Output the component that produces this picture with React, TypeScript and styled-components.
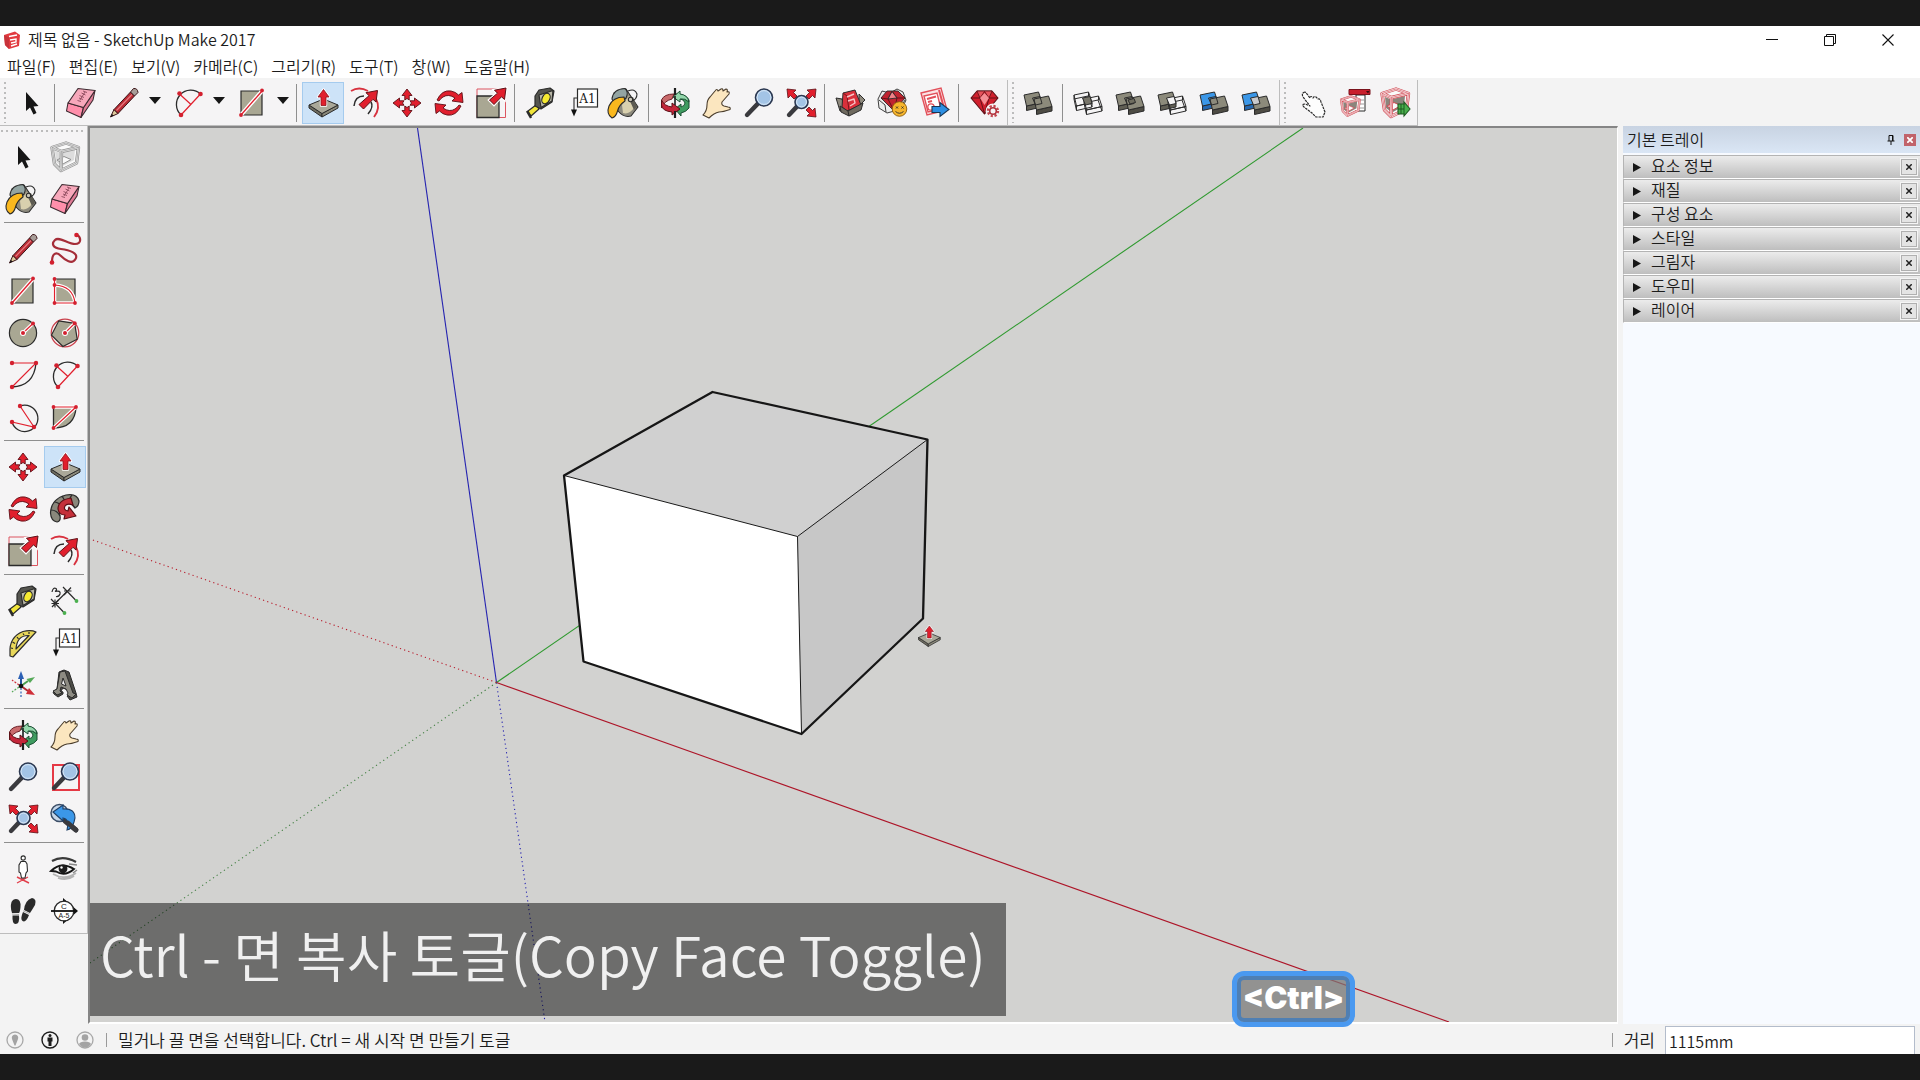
import React from "react";
import styled, { createGlobalStyle } from "styled-components";

const UI_FONT = `"Noto Sans CJK KR", "Open Sans", sans-serif`;

const GlobalStyle = createGlobalStyle`
  * { box-sizing: border-box; }
  body { margin: 0; background: #1a1a1a; }
  button, input { font: inherit; color: inherit; }
`;

/* ---------- icon drawings, all on a 32 x 32 grid ---------- */

const RED = "#e11f2d";
const INK = "#2b2b2b";
const STONE = "#a9a793";

const Dots = ({ at, r = 2 }: { at: [number, number][]; r?: number }) => (
  <>
    {at.map(([x, y]) => (
      <circle key={`${x}-${y}`} cx={x} cy={y} r={r} fill="#d3202f" />
    ))}
  </>
);

const Lens = ({ x, y, r, hx, hy }: { x: number; y: number; r: number; hx: number; hy: number }) => (
  <>
    <path d={`M${x - r * 0.75} ${y + r * 0.75}L${hx} ${hy}`} stroke="#3a3a3e" strokeWidth={4.4} strokeLinecap="round" />
    <circle cx={x} cy={y} r={r} fill="#a3c4e6" stroke="#2c3850" strokeWidth={1.6} />
    <circle cx={x} cy={y} r={r - 1.6} fill="none" stroke="#d7e6f5" strokeWidth={1} />
  </>
);

const ArrowUpRight = () => (
  <path d="M31 1L29.5 12.5L26.5 9.8L19 17.5L14.5 13L22.5 6.2L19.5 3.2Z" fill={RED} stroke="#5c1016" strokeWidth={1} />
);

const Slab = () => (
  <g strokeLinejoin="round">
    <path d="M2 18L15 26.5V30L2 21Z" fill="#6f6d60" stroke={INK} />
    <path d="M31 18L15 26.5V30L31 21Z" fill="#8b897a" stroke={INK} />
    <path d="M2 18L16.5 12L31 18L15 26.5Z" fill="#aaa899" stroke={INK} />
    <path d="M16.5 2.5L22 10H19V18.5H14V10H11Z" fill={RED} stroke="#fff" strokeWidth={2.4} />
    <path d="M16.5 2.5L22 10H19V18.5H14V10H11Z" fill={RED} stroke="#8a131c" strokeWidth={0.8} />
  </g>
);

const Solid = ({ x, y, top, side, wire }: { x: number; y: number; top: string; side: string; wire?: boolean }) => (
  <g transform={`translate(${x} ${y})`} stroke={INK} strokeWidth={1} strokeLinejoin="round">
    <path d="M2.5 14V18.5L18 15V10.5Z" fill={wire ? "none" : side} />
    <path d="M0 3L14.5 0L18 10.5L2.5 14Z" fill={wire ? "none" : top} />
    {wire && <path d="M0 3V7L2.5 18.5M0 7L14 4L18 15M14.5 0V4" fill="none" />}
  </g>
);

const SolidPair = ({ back, mid, wireBack, wireFront }: {
  back?: string; mid?: string; wireBack?: boolean; wireFront?: boolean;
}) => (
  <>
    <Solid x={1} y={5} top={back ?? "#8c8a7b"} side={back ? "#2467b0" : "#605e54"} wire={wireBack} />
    <Solid x={11} y={9} top="#8c8a7b" side="#4e4c44" wire={wireFront} />
    <path d="M9.5 11L17 9.5L19 16.5L12.5 18Z" fill={mid ?? "none"} stroke={INK} />
  </>
);

const BoxFrame = ({ color, light, core }: { color: string; light: string; core: string }) => {
  const d = "M3 6.5L17 2L29.5 6.5L27.5 22L12 29.5L5.5 23ZM3 6.5L12.5 10.5L29.5 6.5M12.5 10.5L12 29.5";
  return (
    <g fill="none" strokeLinejoin="round">
      <path d="M5 8L17 4L28 8L26 21L12 27L6 22Z" fill="#fafafa" />
      <path d="M14 12L26 9L25 19L14 25ZM6 10L11 12L11 24L7 21Z" fill={core} />
      <path d="M8 19L15 15.5L22 18.5L14 23Z" stroke={color} fill="#fafafa" />
      <path d={d} stroke={color} strokeWidth={3.4} />
      <path d={d} stroke={light} strokeWidth={2} />
      <path d={d} stroke={color} strokeWidth={0.6} />
    </g>
  );
};

const Bucket = () => (
  <g stroke={INK} strokeWidth={1.1} strokeLinejoin="round" transform="translate(-2 0)">
    <path d="M7 6L11 24Q17 31 24 29L31 20L19 2Z" fill="#8d8a7d" />
    <path d="M15 18L22 9L27 21Q22 28 16 26Z" fill="#d9d0ae" stroke="none" />
    <path d="M22 12L26 10L30 20L27 23Z" fill="#5d5b52" stroke="none" />
    <path d="M21 4Q28 1 30 7Q30 13 24 14" fill="none" />
    <path d="M5 12Q6 2 18 1.5Q22 5 19 11Q14 16 7 16Z" fill="#93a4a2" />
    <path d="M17 10Q6 10 2 19Q-1 27 5 31Q9 30 10.5 24Q12 18 18 14Z" fill="#fab81e" />
    <circle cx={23.5} cy={12.5} r={2.2} fill="#c9c6b9" />
  </g>
);

const icons = {
  select: <path d="M11 5V24L15 20.5L18.5 27.5L21.5 26L18.5 19.5L23.5 19Z" fill="#161616" />,
  component: <BoxFrame color="#8f8f8f" light="#e6e6e6" core="#dddddd" />,
  paint: <Bucket />,
  eraser: (
    <g stroke="#3d2a30" strokeWidth={1.1} strokeLinejoin="round">
      <path d="M3 16L18.5 20.5L16 30.5L1.5 24Z" fill="#ff8fab" />
      <path d="M18.5 20.5L30 3.5L28 13L16 30.5Z" fill="#e07c96" />
      <path d="M13 1.5L30 3.5L18.5 20.5L3 16Z" fill="#f7a8bb" />
      <path d="M12.5 13.5L16 14.5M14 11L18 12.5M14.5 8.5L19 10.5M16.5 6L20.5 8M18 4L22 5.5M15 13L20 5" fill="none" stroke="#8c4a5c" strokeWidth={0.9} />
    </g>
  ),
  pencil: (
    <g stroke="#3a1216" strokeWidth={1} strokeLinejoin="round">
      <path d="M2.5 30L6 22.5L10 26.5Z" fill="#dcc99b" />
      <path d="M6 22.5L22.5 5L26.5 9L10 26.5Z" fill="#b92a33" />
      <path d="M8.5 23.5L24 7.5" stroke="#e77a80" strokeWidth={1.2} />
      <path d="M22.5 5L25.5 1.5Q29.5 1 30 5.5L26.5 9Z" fill="#a79d98" />
      <path d="M2.5 30L4 27L5.6 28.6Z" fill="#111" stroke="none" />
    </g>
  ),
  freehand: (
    <>
      <path d="M3 29C3 19 8 19 12 23S23 32 26.5 26S20 17 12 16S2 11 6 7S19 11 26 11S32 4 28 2" fill="none" stroke="#a52d38" strokeWidth={2.2} />
      <Dots at={[[3, 29.5], [27.5, 2]]} r={2.3} />
    </>
  ),
  rectangle: (
    <>
      <path d="M5 4H26V28H5Z" fill={STONE} stroke={INK} strokeWidth={1.2} />
      <path d="M5 28L26 4" stroke="#fff" strokeWidth={4} />
      <path d="M5 28L26 4" stroke={RED} strokeWidth={1.3} />
      <Dots at={[[5, 28], [26, 3.5]]} r={1.9} />
    </>
  ),
  rotatedRect: (
    <>
      <path d="M5.5 4H26V28H5.5Z" fill={STONE} stroke={INK} strokeWidth={1.2} />
      <path d="M5.5 4V28H26Q24 11 5.5 10" fill="none" stroke="#fff" strokeWidth={3.6} />
      <path d="M5.5 4V28H26Q24 11 5.5 10" fill="none" stroke={RED} strokeWidth={1.2} />
      <Dots at={[[5.5, 4], [5.5, 10], [5.5, 28], [26, 28]]} r={1.9} />
    </>
  ),
  circle: (
    <>
      <circle cx={16} cy={16} r={13.6} fill={STONE} stroke={INK} strokeWidth={1.2} />
      <path d="M16 16L26 6.5" stroke="#fff" strokeWidth={3.6} />
      <path d="M16 16L26 6.5" stroke={RED} strokeWidth={1.2} />
      <circle cx={16} cy={16} r={3} fill="#fff" />
      <Dots at={[[16, 16], [26, 6.5]]} />
    </>
  ),
  polygon: (
    <>
      <circle cx={16} cy={16} r={13.8} fill="#fbeeee" stroke="#c9404b" strokeWidth={1.2} />
      <path d="M25.7 6.3L28.2 22.2L13.9 29.5L2.5 18.1L9.8 3.8Z" fill={STONE} stroke={INK} strokeWidth={1.2} />
      <path d="M16 16L25.7 6.3" stroke="#fff" strokeWidth={3.6} />
      <path d="M16 16L25.7 6.3" stroke={RED} strokeWidth={1.2} />
      <circle cx={16} cy={16} r={3} fill="#fff" />
      <Dots at={[[16, 16], [25.7, 6.3]]} />
    </>
  ),
  arcCenter: (
    <>
      <path d="M5 28Q27 27 29 4" fill="none" stroke={INK} strokeWidth={1.3} />
      <path d="M5 4H29L5 28" fill="none" stroke={RED} strokeWidth={1.1} />
      <Dots at={[[5, 4], [29, 4], [5, 28]]} r={2.2} />
    </>
  ),
  arc: (
    <>
      <path d="M28.5 7A14.2 14.2 0 0 0 9 28" fill="none" stroke={INK} strokeWidth={1.3} />
      <path d="M28.5 7L9 28M7.5 7L19 17.5" fill="none" stroke={RED} strokeWidth={1.2} />
      <Dots at={[[28.5, 7], [9, 28], [7.5, 6.5]]} r={2.3} />
    </>
  ),
  arc3: (
    <>
      <path d="M13 5A13.2 13.2 0 1 1 5 21" fill="none" stroke={INK} strokeWidth={1.3} />
      <path d="M13 5L27 26L5 21" fill="none" stroke={RED} strokeWidth={1.2} />
      <Dots at={[[13, 5], [27, 26], [5, 21]]} r={2.2} />
    </>
  ),
  pie: (
    <>
      <path d="M4.5 6H27Q26 27 4.5 27Z" fill={STONE} stroke={INK} strokeWidth={1.3} />
      <path d="M4.5 6H27L4.5 27" fill="none" stroke="#fff" strokeWidth={3.6} />
      <path d="M4.5 6H27L4.5 27" fill="none" stroke={RED} strokeWidth={1.2} />
      <Dots at={[[4.5, 6], [27, 6], [4.5, 27]]} r={1.9} />
    </>
  ),
  move: (
    <g fill={RED} stroke="#5c1016" strokeWidth={0.9}>
      {[0, 90, 180, 270].map((a) => (
        <path key={a} d="M16 2L21 8.5H18.2V13L16 11.5L13.8 13V8.5H11Z" transform={`rotate(${a} 16 16)`} />
      ))}
    </g>
  ),
  pushpull: <Slab />,
  rotate: (
    <g fill={RED} stroke="#5c1016" strokeWidth={0.9} strokeLinejoin="round">
      {[0, 180].map((a) => (
        <path key={a} d="M4 13Q9 2.5 18 4Q23 5 25.5 8L29 5.5L30 15.5L19 14L22 11Q15.5 6.5 10 10Q7.5 11.5 6 14Z" transform={`rotate(${a} 16 16)`} />
      ))}
    </g>
  ),
  followMe: (
    <g stroke={INK} strokeWidth={1.2} strokeLinejoin="round">
      <path d="M30 8Q28 0 17 2Q2 6 1.5 20Q2 28 8 29Q12 28 11 23Q9 15 17 11Q23 9 26 15Q30 13 30 8Z" fill="#8a887c" />
      <path d="M23 2Q18 7 26 15M2 17Q8 17 11 23M6 9Q11 10 13 14M13 3Q15 7 18 10" fill="none" />
      <path d="M22 5Q9 7 9 16Q10 22 16 22L15 26L27 23L20 14L19 18Q14 17 16 13Q18 10 24 12Z" fill="#c5303a" stroke="#5c1016" />
    </g>
  ),
  scale: (
    <>
      <path d="M2 2H30.5V30.5H2Z" fill="none" stroke="#dc5560" />
      <path d="M2 9H24V30.5H2Z" fill={STONE} stroke={INK} strokeWidth={1.3} />
      <path d="M31 1L29.5 12.5L26.5 9.8L19 17.5L14.5 13L22.5 6.2L19.5 3.2Z" stroke="#fff" strokeWidth={3} />
      <ArrowUpRight />
    </>
  ),
  offset: (
    <>
      <path d="M2 4Q10 -1 19 4M27 12Q32 21 25 30" fill="none" stroke="#d8323f" strokeWidth={1.9} />
      <path d="M5 19Q6 9 15 9M22 15Q25 20 19 27" fill="none" stroke={INK} strokeWidth={1.5} />
      <g transform="translate(-2.5 2.5)">
        <path d="M31 1L29.5 12.5L26.5 9.8L17 19.5L12.5 15L22.5 6.2L19.5 3.2Z" fill={RED} stroke="#5c1016" />
      </g>
    </>
  ),
  tape: (
    <g stroke={INK} strokeWidth={1.2} strokeLinejoin="round">
      <path d="M3 24L11 18L14 22L6 29Z" fill="#f1e53a" />
      <path d="M2 24L6 31" strokeWidth={2.4} />
      <path d="M10 9L14 3L25 1L29 4L27 15L16 22L10 19Z" fill="#55554f" />
      <path d="M14 8L28 3.5L27 14L16 20.5Z" fill="#b9b7a8" />
      <ellipse cx={21} cy={11.5} rx={3.8} ry={5.6} transform="rotate(25 21 11.5)" fill="#f6ea32" />
    </g>
  ),
  dimension: (
    <>
      <path d="M6 18.5L18.5 6M2 14L14.5 27M14 2L26.5 15" stroke={INK} strokeWidth={1.2} />
      <path d="M2.5 18.5H10M15 6H22.5M9.5 15L3 22M22 2.5L15 10M6 14.5V22.5" stroke={INK} strokeWidth={1.2} />
      <path d="M3 7Q4 2 7 3.5Q8.5 5 6 6.5Q12 5 11 9Q10 12 7 11.5" fill="none" stroke={INK} strokeWidth={1.2} />
      <circle cx={27.5} cy={16} r={1.9} fill="#4bb04f" />
      <circle cx={15.5} cy={28} r={1.9} fill="#4bb04f" />
    </>
  ),
  text: (
    <>
      <rect x={10.5} y={2} width={20} height={18} fill="#fff" stroke={INK} strokeWidth={1.2} />
      <text x={20.5} y={15.5} fontSize={12} textAnchor="middle" fontFamily="'DejaVu Serif', serif" fill="#222">A1</text>
      <path d="M10 11H7V24" fill="none" stroke={INK} strokeWidth={1.1} />
      <path d="M4 22.5H10L7 29.5Z" fill="#111" />
    </>
  ),
  protractor: (
    <g fill="#e8d75a" stroke={INK} strokeWidth={1.2} strokeLinejoin="round">
      <path fillRule="evenodd" d="M3 26Q2 10 16 4.5Q24 2.5 29 5L6 30L3 29ZM9 22L22 8.5Q10 8 9 22Z" />
      <path d="M4 21L6 21.5M5.5 15L8 16.5M10 10L11.5 12M16 6.5L17 8M22 5L22 7" />
    </g>
  ),
  axes: (
    <>
      <path d="M14 17V9" stroke="#27529c" strokeWidth={2} />
      <path d="M14 2L17 10H11Z" fill="#2c60b5" />
      <path d="M14 17L21 12" stroke="#4a9c4e" strokeWidth={2} />
      <path d="M28 8L23 14L19.5 10Z" fill="#55a958" />
      <path d="M14 17L21 22" stroke="#b32a33" strokeWidth={2} />
      <path d="M28 26L19 25L22 19Z" fill="#cf2f39" />
      <path d="M14 19V28" stroke="#2c60b5" strokeWidth={1.2} strokeDasharray="2 1.5" />
      <path d="M12 18L5 23" stroke="#55a958" strokeWidth={1.2} strokeDasharray="2 1.5" />
      <path d="M12 16L5 11" stroke="#cf2f39" strokeWidth={1.2} strokeDasharray="2 1.5" />
      <circle cx={14} cy={17} r={2.3} fill="#111" />
    </>
  ),
  text3d: (
    <g stroke={INK} strokeWidth={1} strokeLinejoin="round">
      <path d="M5 25L9 28L14 25V23L12 22L14 19L19 21L20 26L18 27L21 31L28 28L27 24L20 3L15 1L10 3L8 20L4 23Z" fill="#4c4b46" />
      <path d="M4 22L8 20L11 3L16 2L24 24L27 25L23 29L18 26L19 24L17 20L12 18L11 22L13 24L8 26Z" fill="#8d8b82" />
      <path d="M12.5 15L14 9L17 17Z" fill="#f4f3f4" />
    </g>
  ),
  orbit: (
    <g strokeWidth={1} strokeLinejoin="round">
      <path d="M15 7Q5 7 2.5 13V21Q5 14 13 12Z" fill="#c96a6c" stroke="#6b1e24" />
      <path d="M17 7Q27 7 30 13V21Q27 25 22 26V29L16 22L22 17V20Q26 19 26 16Q25 12 17 11Z" fill="#3f9c60" stroke="#1c4f33" />
      <path d="M14 10L21 4V7Q29 8 30 15Q26 11 21 12V15Z" fill="#93d6ab" stroke="#1c4f33" />
      <path d="M2.5 13Q5 19 13 20V16L21 22L13 28V25Q3 24 2.5 18Z" fill="#c4263a" stroke="#5c1016" />
      <path d="M16 1V8M16 24V31" stroke="#1e1e1e" strokeWidth={2.2} />
      <path d="M16 9V18" stroke="#1e1e1e" strokeWidth={1.6} />
    </g>
  ),
  pan: (
    <path d="M2 28Q6 24 6 18Q6 13 9 10L14 4Q16 1 17 4L20 2Q22 1 22 4L25 2Q27 2 26 5Q29 4 28 7L21 15Q20 18 23 19L27 20Q30 20 29 22.5Q22 25 18 25Q13 26 8 31Z" fill="#fbe6bf" stroke="#4a3d2c" strokeWidth={1.1} strokeLinejoin="round" />
  ),
  zoom: <Lens x={21} y={10.5} r={8.5} hx={4} hy={28} />,
  zoomWindow: (
    <>
      <path d="M4 4H30V29H4Z" fill="none" stroke="#e53945" strokeWidth={2} />
      <Lens x={21} y={10.5} r={8.5} hx={5} hy={27} />
    </>
  ),
  zoomExtents: (
    <>
      <g fill={RED} stroke="#5c1016" strokeWidth={0.8}>
        <path d="M2 2L11 3L8.5 5.5L12 9L9 12L5.5 8.5L3 11Z" />
        <path d="M31 2L30 11L27.5 8.5L24 12L21 9L24.5 5.5L22 3Z" />
        <path d="M31 30L22 29L24.5 26.5L21 23L24 20L27.5 23.5L30 21Z" />
      </g>
      <Lens x={16.5} y={15} r={6.5} hx={4} hy={28} />
    </>
  ),
  previous: (
    <>
      <circle cx={10.5} cy={10} r={8.5} fill="#c6d6e8" stroke="#3b4d66" strokeWidth={1.5} />
      <path d="M16 18L27 27" stroke="#3a3a3e" strokeWidth={5} strokeLinecap="round" />
      <path d="M4 9L14 2V6Q26 5 26 15L25 19Q23 26 18 27Q21 16 14 15V18Z" fill="#3b97e8" stroke="#1d3f66" strokeWidth={1.1} />
      <path d="M19 20L27 27" stroke="#3a3a3e" strokeWidth={4.6} strokeLinecap="round" />
    </>
  ),
  positionCamera: (
    <>
      <path d="M10 30L21 24M10 24L22 30M16 24V28" stroke="#e2404c" strokeWidth={1.4} />
      <path d="M14 8.5L12 12V19L13.5 20L14.5 25H18L19 20L20.5 18L20 11L18.5 8.5Z" fill="#fff" stroke={INK} strokeWidth={1.1} />
      <circle cx={16.2} cy={5} r={2.1} fill="#fff" stroke={INK} strokeWidth={1.1} />
    </>
  ),
  eye: (
    <>
      <path d="M3 8Q14 2 27 9" fill="none" stroke="#3a3a3a" strokeWidth={2.2} />
      <path d="M4 21Q16 28 27 20M9 25Q18 28 25 23" fill="none" stroke="#b4b4b4" strokeWidth={1.8} />
      <path d="M2 18Q12 8 25 16Q16 24 7 18.5Z" fill="#f6f6f6" stroke="#161616" strokeWidth={1.9} />
      <circle cx={14} cy={15.8} r={4.4} fill="#1c1c1c" />
      <circle cx={12.5} cy={14.5} r={1.2} fill="#fff" />
      <path d="M20 11L28 12M24 20L28 17" stroke="#888" strokeWidth={1.4} />
    </>
  ),
  walk: (
    <g fill="#2a2a2a">
      <path d="M9 4Q14 4 13.5 12Q13 17 12 18L5 18Q3 12 4.5 7Q6 4 9 4Z" />
      <path d="M5.5 20.5H12Q13 29 8.5 29Q5 29 5.5 20.5Z" />
      <path d="M25 3Q30 4 28 10Q25 15 23 18L17 15Q18 5 25 3Z" />
      <path d="M16 17L22 20Q19 28 15.5 26Q13 24 16 17Z" />
      <path d="M5 19L12 19.5M16 15.8L22.5 18.7" stroke="#aaa" strokeWidth={1} />
    </g>
  ),
  section: (
    <>
      <path d="M14 3L29 16L14 29Z" fill="#111" />
      <circle cx={15} cy={16} r={9.8} fill="#fff" stroke={INK} strokeWidth={1.3} />
      <path d="M2 16H28" stroke="#111" strokeWidth={1.8} />
      <text x={15} y={13.5} fontSize={8} textAnchor="middle" fontFamily="'Liberation Sans', sans-serif" fill="#222">C</text>
      <text x={15} y={23} fontSize={7} textAnchor="middle" fontFamily="'Liberation Sans', sans-serif" fill="#222">A-5</text>
    </>
  ),
  warehouse: (
    <g stroke={INK} strokeWidth={1} strokeLinejoin="round">
      <path d="M1 11L7 12L10 23L5 24ZM24 7L30 13L24 19Z" fill="#8e897d" />
      <path d="M8 6L20 3L26 18L12 24L7 20Z" fill="#d9303b" />
      <path d="M8 6L12 9L14 23" fill="none" stroke="#7a131c" />
      <path d="M12 10L19 7M13 14L19 12L20 16L15 19" fill="none" stroke="#f6c4c7" strokeWidth={1.4} />
      <path d="M5 19L13 24L28 16L26 23L14 29L6 25Z" fill="#6f6a5f" />
      <path d="M13 24L14 29" />
    </g>
  ),
  extensions: (
    <g stroke={INK} strokeWidth={0.9} strokeLinejoin="round">
      <path d="M5 4L13 6L20 2L26 5L29 13L25 22L10 26L2 21L1 12Z" fill="#ececec" />
      <path d="M4 11L10 4L21 4L28 11L17 24Z" fill="#c02330" />
      <path d="M4 11L11 12L17 24M11 12L15 4L20 11L28 11M20 11L17 24" fill="none" stroke="#5c1016" />
      <path d="M11 12L15 4.5L20 11Z" fill="#f08088" />
      <path d="M2 13L8 18L9 25M25 18L28 13" fill="none" />
      <circle cx={22.5} cy={22} r={7.3} fill="#f6b52c" stroke="#8a5b0c" />
      <path d="M19 19.5L21 21.5M21 19.5L19 21.5M24.5 19.5L26.5 21.5M26.5 19.5L24.5 21.5M18.5 24.5Q22.5 28 26.5 24.5" fill="none" />
    </g>
  ),
  layout: (
    <>
      <path d="M2 6L22 1L28 23L8 28Z" fill="#fbe3e4" stroke="#e2505a" strokeWidth={1.4} />
      <path d="M5 9L18 6L22 22L9 25Z" fill="#fff" stroke="#e2505a" strokeWidth={1.4} />
      <path d="M8 12L17 9.5M9 15L13 14M20 3L25 21" stroke="#e2505a" strokeWidth={2} />
      <circle cx={12} cy={20} r={3.2} fill="#fff" stroke="#e2505a" strokeWidth={1.3} />
      <path d="M13 19.5H21V15.5L30 22.5L21 29.5V25.5H13Z" fill="#2c8fe3" stroke="#1a3552" strokeWidth={1.1} />
    </>
  ),
  extensionManager: (
    <g strokeLinejoin="round">
      <path d="M2 11L8 4H23L29 11L15.5 27Z" fill="#d0202d" stroke="#5c1016" strokeWidth={1.1} />
      <path d="M8 4L11 11L15.5 4.5L20 11L23 4Z" fill="#e8525b" stroke="#5c1016" strokeWidth={0.8} />
      <path d="M2 11H29M11 11L15.5 27L20 11" fill="none" stroke="#5c1016" strokeWidth={0.9} />
      <path d="M11 11L15.5 6L20 11L15.5 18Z" fill="#f58f95" />
      <circle cx={24} cy={24} r={5.2} fill="none" stroke="#f4f3f4" strokeWidth={4.5} />
      <circle cx={24} cy={24} r={5} fill="none" stroke="#c4464f" strokeWidth={2.4} strokeDasharray="2.2 1.7" />
      <circle cx={24} cy={24} r={3.3} fill="#f4f3f4" stroke="#b0323c" strokeWidth={1.6} />
    </g>
  ),
  outerShell: <SolidPair />,
  intersect: <SolidPair wireBack wireFront mid="#77756a" />,
  union: (
    <>
      <SolidPair />
      <path d="M13 13L19 11.5L20.5 15.5L15 17Z" fill="#6f6d60" stroke={INK} />
    </>
  ),
  subtract: <SolidPair wireFront mid="#f4f3f4" />,
  trim: <SolidPair back="#3b97e8" />,
  split: <SolidPair back="#3b97e8" mid="#c9c9cc" />,
  hand: (
    <path transform="translate(4 2)" d="M6 3Q2 4 4 8L11 17L6 15Q2 15 5 18L13 24L17 28H24L26 23L22 13Q21 9 19 10L17 8Q15 7 14 9Q12 6 11 9L8 5Z" fill="#fdfdfd" stroke={INK} strokeWidth={1.2} strokeDasharray="2.5 0.8" strokeLinejoin="round" />
  ),
  componentOptions: (
    <g transform="translate(1 0)">
      <path d="M18 8H27V24H18Z" fill="#fff" stroke={INK} />
      <path d="M20 13H26M20 17H26M20 21H26" stroke="#9a9a9a" />
      <path d="M11 2.5H32V7.5H11Z" fill="#c91f2c" stroke="#7a131c" />
      <path d="M28 4H31.5L30 6.5Z" fill="#3c0a0e" />
      <g transform="translate(1 8) scale(0.7)"><BoxFrame color="#cf4650" light="#f9e6e7" core="#8b857c" /></g>
    </g>
  ),
  componentAttributes: (
    <>
      <BoxFrame color="#cf4650" light="#fbeced" core="#8b857c" />
      <path d="M19 17H25V15L31 22L25 29V27H19Z" fill="#49b04d" stroke="#1f5a22" strokeWidth={1.1} />
      <path d="M19 22H25M22 17V27M25 17V27" stroke="#1f5a22" />
    </>
  ),
};

type IconName = keyof typeof icons;

const IconSvg = styled.svg`
  display: block;
  width: 32px;
  height: 32px;
  overflow: visible;
`;

const Icon = ({ name }: { name: IconName }) => (
  <IconSvg viewBox="0 0 32 32" fill="none" aria-hidden="true">
    {icons[name]}
  </IconSvg>
);

/* ---------- window frame ---------- */

const Screen = styled.div`
  height: 100vh;
  min-height: 600px;
  padding: 26px 0;
  background: #1a1a1a;
  font-family: ${UI_FONT};
  font-size: 16px;
  font-weight: 350;
  color: #1c1c1c;
`;

const AppWindow = styled.div`
  display: flex;
  flex-direction: column;
  height: 100%;
  background: #f3f3f3;
`;

const TitleBar = styled.header`
  display: flex;
  align-items: center;
  height: 28px;
  padding: 0 3px;
  background: #fff;
`;

const Logo = styled.svg`
  width: 18px;
  height: 18px;
  margin-right: 7px;
`;

const Title = styled.h1`
  flex: 1;
  margin: 0;
  padding-bottom: 2px;
  font-size: 16px;
  font-weight: 350;
  line-height: 24px;
`;

const WindowButton = styled.button`
  display: grid;
  place-items: center;
  width: 58px;
  height: 28px;
  padding: 0;
  border: 0;
  background: none;
`;

const MenuBar = styled.nav`
  display: flex;
  align-items: center;
  height: 24px;
  padding-left: 1px;
  background: #fff;
`;

const MenuButton = styled.button`
  padding: 0 7px 0 6px;
  border: 0;
  background: none;
  line-height: 24px;
  white-space: nowrap;
`;

/* ---------- toolbars ---------- */

const ToolbarRow = styled.div`
  display: flex;
  height: 48px;
  padding-top: 2px;
`;

const Toolbar = styled.div`
  display: flex;
  align-items: center;
  padding-right: 1px;
  border-right: 1px solid #bdbdbd;
  border-bottom: 1px solid #bdbdbd;
  background: #f5f4f5;
`;

const Grip = styled.div<{ $across?: boolean }>`
  width: ${(p) => (p.$across ? "auto" : "2px")};
  height: ${(p) => (p.$across ? "2px" : "41px")};
  margin: ${(p) => (p.$across ? "4px 2px 4px 1px" : "0 4px")};
  background: repeating-linear-gradient(
    ${(p) => (p.$across ? "90deg" : "180deg")},
    #bcbcbc 0 2px,
    transparent 2px 5px
  );
`;

const ToolButton = styled.button<{ $active?: boolean; $wide?: boolean }>`
  display: grid;
  place-items: center;
  width: ${(p) => (p.$wide ? "44px" : "42px")};
  height: 42px;
  padding: 0;
  border: 1px solid ${(p) => (p.$active ? "#a5cbee" : "transparent")};
  background: ${(p) => (p.$active ? "#cde3f8" : "none")};
`;

const DropButton = styled.button`
  display: grid;
  place-items: center;
  width: 20px;
  height: 42px;
  padding: 0 2px 4px 0;
  border: 0;
  background: none;
`;

const Divider = styled.div`
  width: 1px;
  height: 38px;
  margin: 0 5px 0 2px;
  background: #8f8f8f;
`;

type Tool = { icon: IconName; label: string; drop?: boolean; active?: boolean };

const topToolbars: Tool[][][] = [
  [
    [{ icon: "select", label: "선택" }],
    [
      { icon: "eraser", label: "지우기" },
      { icon: "pencil", label: "선", drop: true },
      { icon: "arc", label: "호", drop: true },
      { icon: "rectangle", label: "직사각형", drop: true },
    ],
    [
      { icon: "pushpull", label: "밀기/끌기", active: true },
      { icon: "offset", label: "오프셋" },
      { icon: "move", label: "이동" },
      { icon: "rotate", label: "회전" },
      { icon: "scale", label: "배율" },
    ],
    [
      { icon: "tape", label: "줄자 도구" },
      { icon: "text", label: "텍스트" },
      { icon: "paint", label: "페인트통" },
    ],
    [
      { icon: "orbit", label: "궤도" },
      { icon: "pan", label: "이동 보기" },
      { icon: "zoom", label: "확대/축소" },
      { icon: "zoomExtents", label: "범위 확대/축소" },
    ],
    [
      { icon: "warehouse", label: "3D Warehouse" },
      { icon: "extensions", label: "Extension Warehouse" },
      { icon: "layout", label: "LayOut으로 보내기" },
    ],
    [{ icon: "extensionManager", label: "확장 관리자" }],
  ],
  [
    [{ icon: "outerShell", label: "외부 셸" }],
    [
      { icon: "intersect", label: "교차" },
      { icon: "union", label: "합집합" },
      { icon: "subtract", label: "빼기" },
      { icon: "trim", label: "트림" },
      { icon: "split", label: "분할" },
    ],
  ],
  [
    [
      { icon: "hand", label: "상호 작용" },
      { icon: "componentOptions", label: "구성 요소 옵션" },
      { icon: "componentAttributes", label: "구성 요소 속성" },
    ],
  ],
];

const sideGroups: Tool[][] = [
  [
    { icon: "select", label: "선택" },
    { icon: "component", label: "구성 요소 만들기" },
    { icon: "paint", label: "페인트통" },
    { icon: "eraser", label: "지우기" },
  ],
  [
    { icon: "pencil", label: "선" },
    { icon: "freehand", label: "자유형" },
    { icon: "rectangle", label: "직사각형" },
    { icon: "rotatedRect", label: "회전된 직사각형" },
    { icon: "circle", label: "원" },
    { icon: "polygon", label: "다각형" },
    { icon: "arcCenter", label: "호" },
    { icon: "arc", label: "2점 호" },
    { icon: "arc3", label: "3점 호" },
    { icon: "pie", label: "파이" },
  ],
  [
    { icon: "move", label: "이동" },
    { icon: "pushpull", label: "밀기/끌기", active: true },
    { icon: "rotate", label: "회전" },
    { icon: "followMe", label: "따라가기" },
    { icon: "scale", label: "배율" },
    { icon: "offset", label: "오프셋" },
  ],
  [
    { icon: "tape", label: "줄자 도구" },
    { icon: "dimension", label: "치수" },
    { icon: "protractor", label: "각도기" },
    { icon: "text", label: "텍스트" },
    { icon: "axes", label: "축" },
    { icon: "text3d", label: "3D 텍스트" },
  ],
  [
    { icon: "orbit", label: "궤도" },
    { icon: "pan", label: "이동 보기" },
    { icon: "zoom", label: "확대/축소" },
    { icon: "zoomWindow", label: "창 확대/축소" },
    { icon: "zoomExtents", label: "범위 확대/축소" },
    { icon: "previous", label: "이전" },
  ],
  [
    { icon: "positionCamera", label: "카메라 배치" },
    { icon: "eye", label: "둘러보기" },
    { icon: "walk", label: "걷기" },
    { icon: "section", label: "단면 평면" },
  ],
];

/* ---------- body ---------- */

const Body = styled.div`
  display: flex;
  flex: 1;
  min-height: 0;
`;

const SidePalette = styled.aside`
  align-self: flex-start;
  width: 88px;
  padding-bottom: 1px;
  border-right: 1px solid #bdbdbd;
  border-bottom: 1px solid #bdbdbd;
  background: #f5f4f5;
`;

const SideGroup = styled.div`
  display: grid;
  grid-template-columns: 42px 42px;
  padding-left: 2px;

  & + & {
    margin-top: 2px;
    padding-top: 5px;
  }
  & + &::before {
    content: "";
    grid-column: 1 / -1;
    height: 1px;
    margin: -5px 2px 5px 2px;
    background: #8f8f8f;
  }
`;

const Viewport = styled.main`
  position: relative;
  flex: 1;
  min-width: 0;
  border: solid;
  border-width: 2px 1px 2px 2px;
  border-color: #858585 #fff #fff #858585;
  background: #d2d2d0;
`;

const Scene = styled.svg`
  display: block;
  width: 100%;
  height: 100%;
`;

const Caption = styled.p`
  position: absolute;
  left: 0;
  bottom: 6px;
  margin: 0;
  padding: 0 20px 12px 10px;
  background: rgba(0, 0, 0, 0.48);
  color: #f0f0f0;
  font-weight: 350;
  font-size: 55px;
  line-height: 101px;
  white-space: nowrap;
`;

const KeyBadge = styled.kbd`
  position: absolute;
  right: 262px;
  bottom: -5px;
  display: grid;
  place-items: center;
  width: 123px;
  height: 56px;
  padding-bottom: 3px;
  border: 5px solid #4a99f0;
  border-radius: 12px;
  background: rgba(120, 120, 120, 0.72);
  box-shadow: inset 0 0 0 4px #4f7fb3;
  color: #fff;
  font-family: Inter, sans-serif;
  font-weight: 900;
  font-size: 31px;
  line-height: 1;
`;

const Tray = styled.aside`
  display: flex;
  flex-direction: column;
  width: 297px;
  margin-left: 5px;
  background: #f7faff;
`;

const TrayHeader = styled.div`
  display: flex;
  align-items: center;
  height: 27px;
  margin-bottom: 2px;
  padding: 0 4px 0 4px;
  background: linear-gradient(#c8d3e2, #dae6f5);
`;

const TrayTitle = styled.h2`
  flex: 1;
  margin: 0;
  padding-bottom: 2px;
  font-size: 16px;
  font-weight: 350;
  line-height: 24px;
`;

const TrayIconButton = styled.button<{ $danger?: boolean }>`
  display: grid;
  place-items: center;
  width: 12px;
  height: 12px;
  margin-left: 7px;
  padding: 0;
  border: 0;
  background: ${(p) => (p.$danger ? "#c1636b" : "none")};
`;

const TrayRow = styled.div`
  display: flex;
  align-items: center;
  height: 24px;
  padding-right: 3px;
  border-top: 1px solid #b4b4b4;
  border-left: 1px solid #b4b4b4;
  border-bottom: 1px solid #fff;
  background: linear-gradient(#ececec, #bebebe);
`;

const TrayToggle = styled.button`
  display: flex;
  flex: 1;
  align-items: center;
  gap: 10px;
  padding: 0 0 0 9px;
  border: 0;
  background: none;
`;

const TrayLabel = styled.span`
  padding-bottom: 4px;
  line-height: 18px;
`;

const TrayClose = styled.button`
  display: grid;
  place-items: center;
  width: 16px;
  height: 16px;
  padding: 0;
  border: 1px solid #b0b0b0;
  outline: 1px solid #f5f5f5;
  background: #e4e4e4;
`;

const StatusBar = styled.footer`
  display: flex;
  align-items: center;
  height: 30px;
  padding: 2px 5px 0 6px;
`;

const StatusIcons = styled.div`
  display: flex;
  gap: 17px;
  margin-right: 12px;
`;

const StatusButton = styled.button`
  width: 18px;
  height: 18px;
  padding: 0;
  border: 0;
  background: none;

  svg { display: block; }
`;

const StatusDivider = styled.div`
  width: 1px;
  height: 14px;
  margin-right: 11px;
  background: #9a9a9a;
`;

const StatusText = styled.span`
  flex: 1;
  font-size: 17px;
  line-height: 24px;
  white-space: nowrap;
`;

const MeasureLabel = styled.label`
  margin-right: 10px;
  font-size: 17px;
  line-height: 24px;
`;

const MeasureInput = styled.input`
  width: 250px;
  height: 28px;
  padding: 0 3px;
  border: 1px solid #b3bccb;
  border-bottom: 0;
  background: #fff;
`;

const Cross = ({ size, color, width }: { size: number; color: string; width: number }) => (
  <svg width={size} height={size} viewBox="0 0 12 12" aria-hidden="true">
    <path d="M0.5 0.5L11.5 11.5M11.5 0.5L0.5 11.5" stroke={color} strokeWidth={width} />
  </svg>
);

const menus = ["파일(F)", "편집(E)", "보기(V)", "카메라(C)", "그리기(R)", "도구(T)", "창(W)", "도움말(H)"];
const panels = ["요소 정보", "재질", "구성 요소", "스타일", "그림자", "도우미", "레이어"];

const ModelScene = () => (
  <Scene viewBox="90 128 1527 894" preserveAspectRatio="xMinYMin slice" role="img" aria-label="모델">
    <g fill="none" strokeWidth={1.1}>
      <path d="M496.5 682.5L417.5 128" stroke="#2523b0" />
      <path d="M496.5 682.5L1303 128" stroke="#2f9a2f" />
      <path d="M496.5 682.5L1449 1022" stroke="#ad1528" />
      <g strokeDasharray="1.2 3.2">
        <path d="M496.5 682.5L545 1022" stroke="#2523b0" />
        <path d="M496.5 682.5L90 963" stroke="#3c7c3c" />
        <path d="M496.5 682.5L90 539" stroke="#b81a2a" />
      </g>
    </g>
    <path d="M712.5 392L927.5 439.5L797.5 536.5L564 475.5Z" fill="#d0d0d0" />
    <path d="M564 475.5L797.5 536.5L801.5 734L583.5 661.5Z" fill="#fff" />
    <path d="M797.5 536.5L927.5 439.5L923 618.5L801.5 734Z" fill="#c7c7c7" />
    <path d="M564 475.5L797.5 536.5L927.5 439.5M797.5 536.5L801.5 734" fill="none" stroke="#1a1a1a" />
    <path d="M712.5 392L927.5 439.5L923 618.5L801.5 734L583.5 661.5L564 475.5Z" fill="none" stroke="#161616" strokeWidth={2.3} strokeLinejoin="round" />
    <svg x={916} y={624} width={26} height={24} viewBox="0 0 32 32">
      <Slab />
    </svg>
  </Scene>
);

export default function App() {
  return (
    <Screen>
      <GlobalStyle />
      <AppWindow>
        <TitleBar>
          <Logo viewBox="0 0 18 18" aria-hidden="true">
            <path d="M1 4L12 0.5L17 4L16 15L6 18L2 14Z" fill="#e23a3f" />
            <path d="M1 4L6 6.5L6 18L2 14Z" fill="#c7333a" />
            <path d="M6 5.5L14 4M7 9L13 8V11L8 12M8 15L14 13" fill="none" stroke="#fff" strokeWidth={1.4} />
          </Logo>
          <Title>제목 없음 - SketchUp Make 2017</Title>
          <WindowButton aria-label="최소화">
            <svg width="12" height="12" viewBox="0 0 12 12"><path d="M0 5.5H12" stroke="#111" /></svg>
          </WindowButton>
          <WindowButton aria-label="이전 크기로 복원">
            <svg width="12" height="12" viewBox="0 0 12 12"><path d="M0.5 2.5H9.5V11.5H0.5ZM2.5 2.5V0.5H11.5V9.5H9.5" fill="none" stroke="#111" /></svg>
          </WindowButton>
          <WindowButton aria-label="닫기">
            <Cross size={12} color="#111" width={1.1} />
          </WindowButton>
        </TitleBar>

        <MenuBar aria-label="메뉴">
          {menus.map((m) => (
            <MenuButton key={m}>{m}</MenuButton>
          ))}
        </MenuBar>

        <ToolbarRow>
          {topToolbars.map((groups, t) => (
            <Toolbar key={t} role="toolbar">
              <Grip />
              {groups.map((tools, g) => (
                <React.Fragment key={g}>
                  {g > 0 && <Divider />}
                  {tools.map((tool) => (
                    <React.Fragment key={tool.icon}>
                      <ToolButton $active={tool.active} $wide={tool.drop} aria-label={tool.label}>
                        <Icon name={tool.icon} />
                      </ToolButton>
                      {tool.drop && (
                        <DropButton aria-label={`${tool.label} 목록`}>
                          <svg width="12" height="7" viewBox="0 0 12 7"><path d="M0 0H12L6 7Z" fill="#161616" /></svg>
                        </DropButton>
                      )}
                    </React.Fragment>
                  ))}
                </React.Fragment>
              ))}
            </Toolbar>
          ))}
        </ToolbarRow>

        <Body>
          <SidePalette>
            <Grip $across />
            {sideGroups.map((tools, g) => (
              <SideGroup key={g}>
                {tools.map((tool) => (
                  <ToolButton key={tool.icon} $active={tool.active} aria-label={tool.label}>
                    <Icon name={tool.icon} />
                  </ToolButton>
                ))}
              </SideGroup>
            ))}
          </SidePalette>

          <Viewport>
            <ModelScene />
            <Caption>Ctrl - 면 복사 토글(Copy Face Toggle)</Caption>
            <KeyBadge>&lt;Ctrl&gt;</KeyBadge>
          </Viewport>

          <Tray>
            <TrayHeader>
              <TrayTitle>기본 트레이</TrayTitle>
              <TrayIconButton aria-label="자동 숨기기">
                <svg width="8" height="10" viewBox="0 0 8 10"><path d="M2 0.5H6V6M2 0.5V6M0.5 6H7.5M4 6V10M5.5 1V6" fill="none" stroke="#111" /></svg>
              </TrayIconButton>
              <TrayIconButton $danger aria-label="트레이 닫기">
                <Cross size={6} color="#fff" width={3.5} />
              </TrayIconButton>
            </TrayHeader>
            {panels.map((p) => (
              <TrayRow key={p}>
                <TrayToggle aria-expanded="false">
                  <svg width="8" height="9" viewBox="0 0 8 9"><path d="M0 0L8 4.5L0 9Z" fill="#161616" /></svg>
                  <TrayLabel>{p}</TrayLabel>
                </TrayToggle>
                <TrayClose aria-label={`${p} 닫기`}>
                  <Cross size={6} color="#222" width={3} />
                </TrayClose>
              </TrayRow>
            ))}
          </Tray>
        </Body>

        <StatusBar>
          <StatusIcons>
            <StatusButton aria-label="위치 정보">
              <svg width="18" height="18" viewBox="0 0 18 18">
                <circle cx="9" cy="9" r="8" fill="none" stroke="#a8a8a8" strokeWidth="1.3" />
                <path d="M9 3.5Q13 4 12 8L9.5 14.5H8.5L6 8Q5 4 9 3.5Z" fill="#a3a3a3" />
              </svg>
            </StatusButton>
            <StatusButton aria-label="작성자 표시">
              <svg width="18" height="18" viewBox="0 0 18 18">
                <circle cx="9" cy="9" r="8" fill="none" stroke="#1c1c1c" strokeWidth="1.4" />
                <circle cx="9" cy="4.5" r="1.5" fill="#1c1c1c" />
                <path d="M6.5 6.5H11.5V10.5H10.5V15H7.5V10.5H6.5Z" fill="#1c1c1c" />
              </svg>
            </StatusButton>
            <StatusButton aria-label="로그인">
              <svg width="18" height="18" viewBox="0 0 18 18">
                <circle cx="9" cy="9" r="8" fill="none" stroke="#a8a8a8" strokeWidth="1.3" />
                <circle cx="9" cy="6.5" r="3.3" fill="#a3a3a3" />
                <path d="M3 13Q4 10.5 9 10.5T15 13Q12.5 16.5 9 16.5T3 13Z" fill="#a3a3a3" />
              </svg>
            </StatusButton>
          </StatusIcons>
          <StatusDivider />
          <StatusText>밀거나 끌 면을 선택합니다. Ctrl = 새 시작 면 만들기 토글</StatusText>
          <StatusDivider />
          <MeasureLabel htmlFor="measure">거리</MeasureLabel>
          <MeasureInput id="measure" defaultValue="1115mm" />
        </StatusBar>
      </AppWindow>
    </Screen>
  );
}
